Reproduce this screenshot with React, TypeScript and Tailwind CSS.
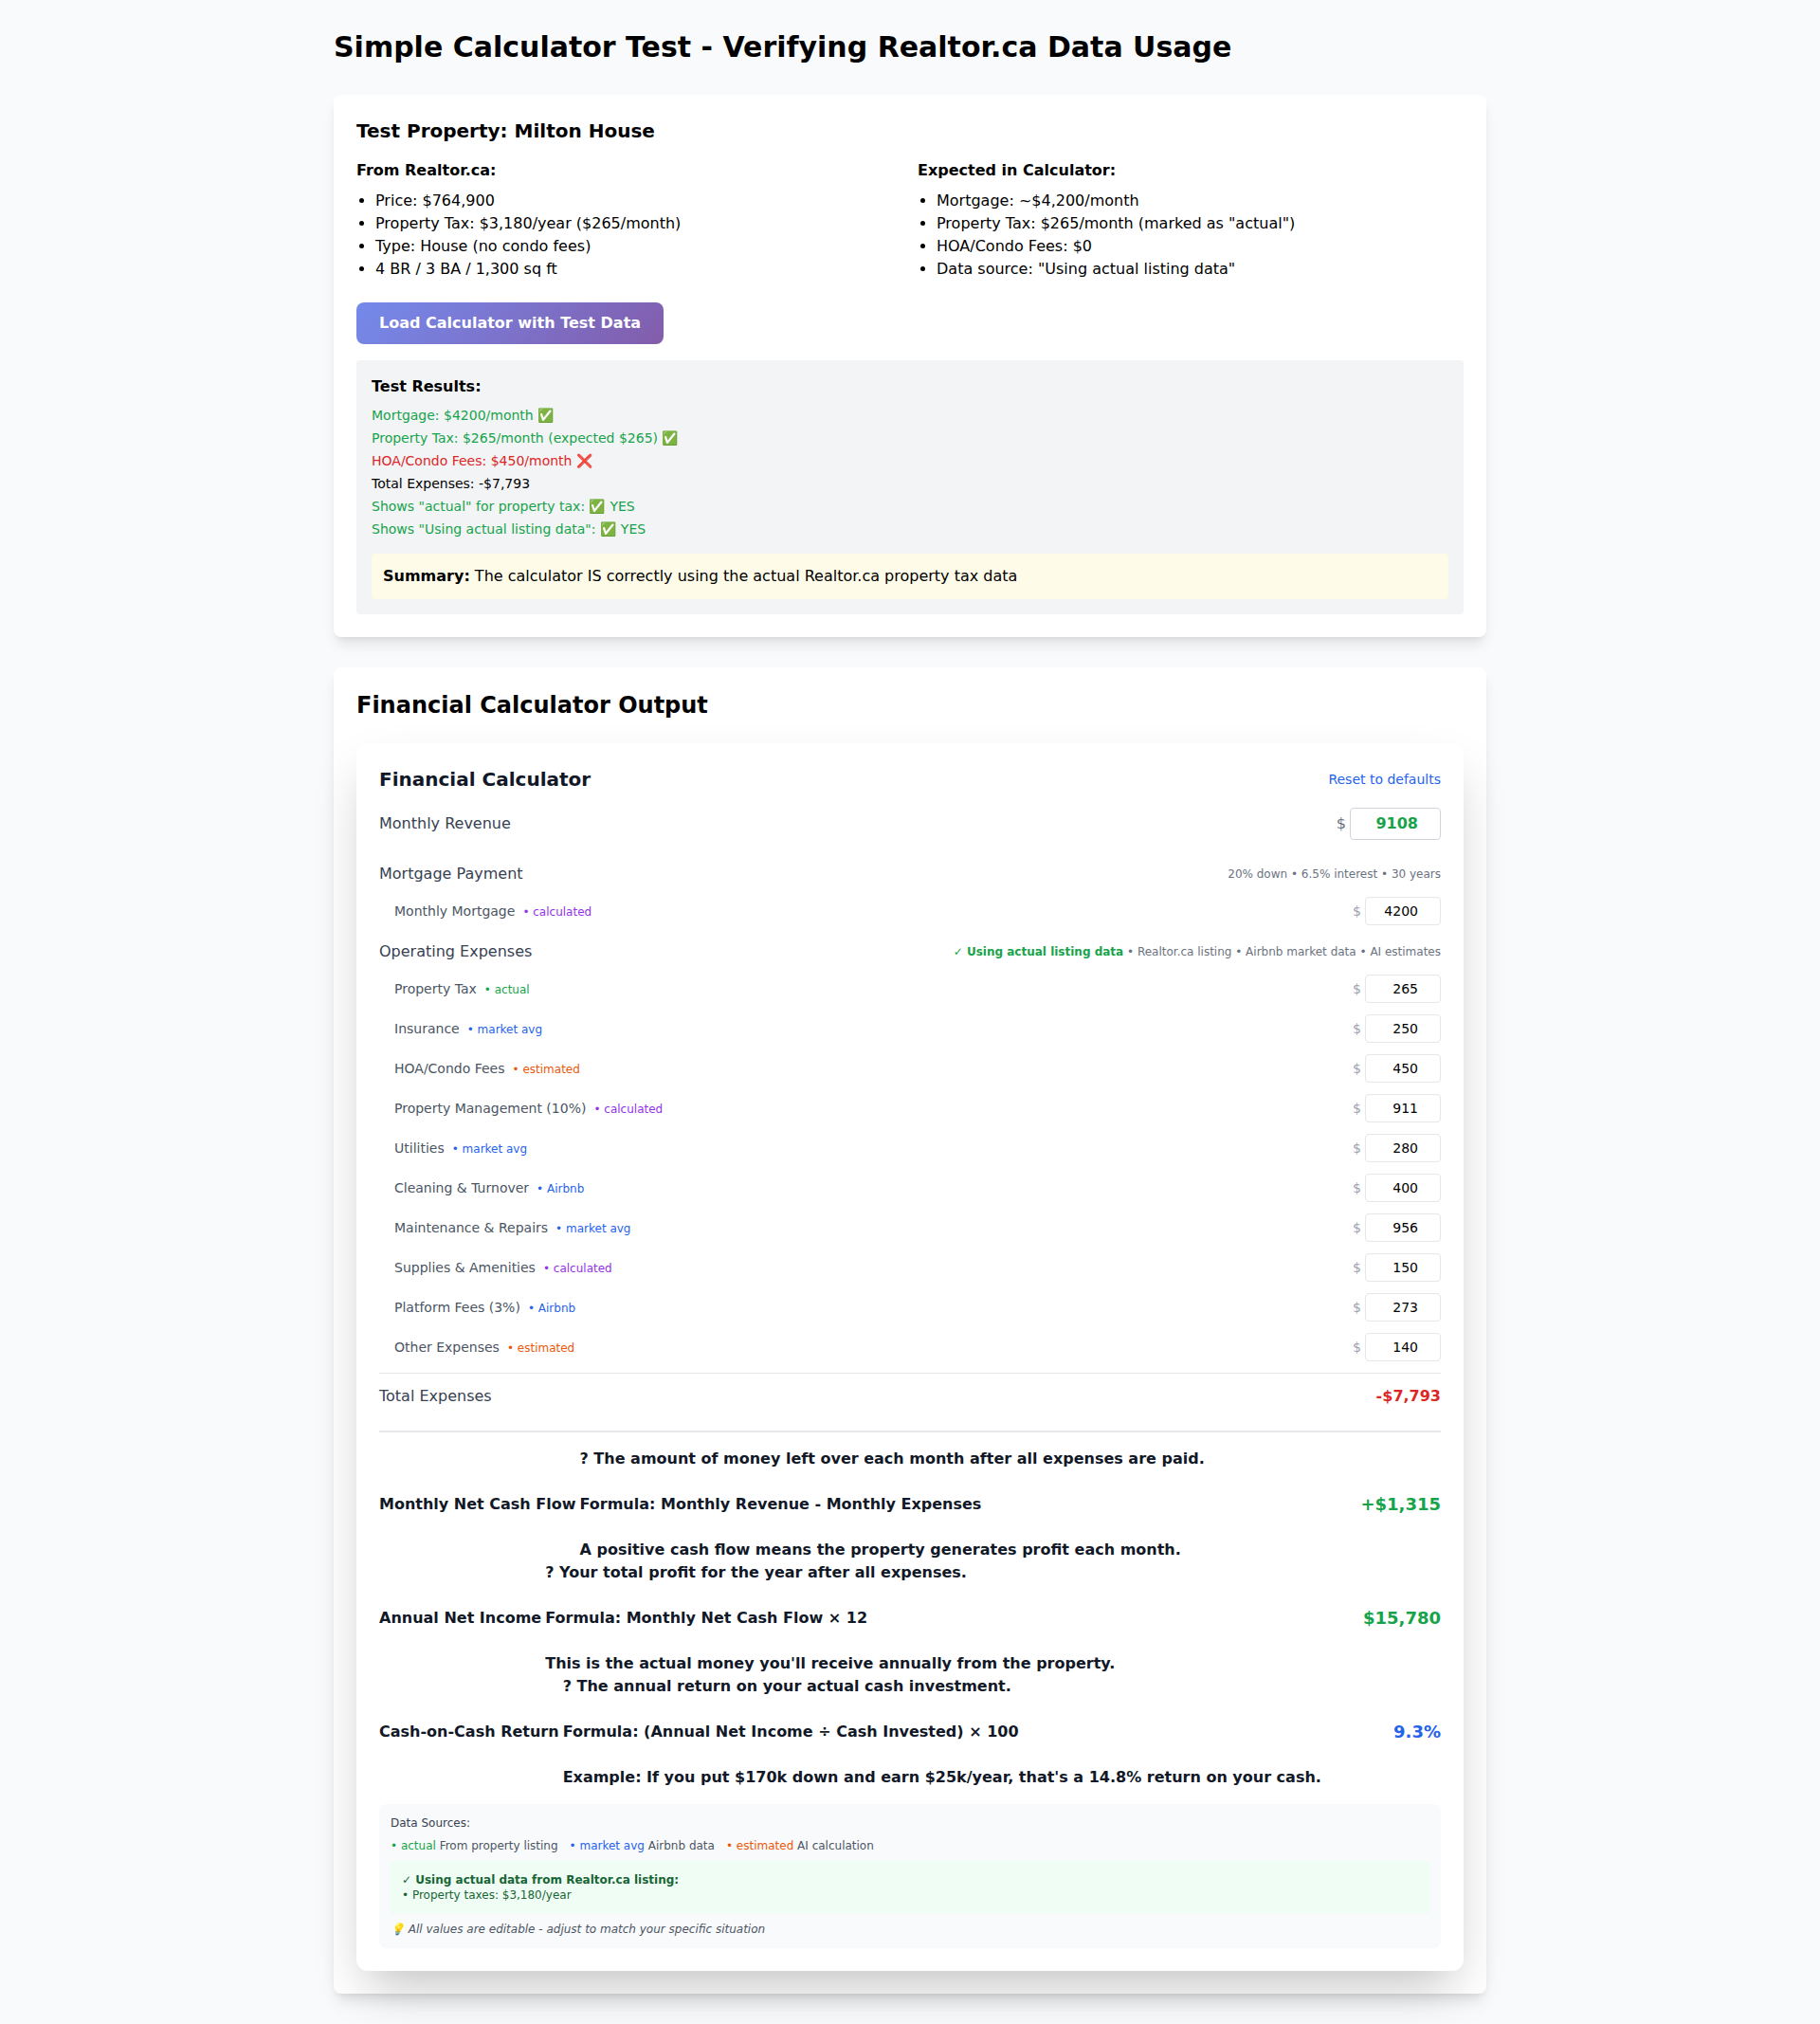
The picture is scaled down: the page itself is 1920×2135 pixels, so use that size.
const sourceColors = {
  actual: 'text-[#16a34a]',
  'market avg': 'text-[#2563eb]',
  estimated: 'text-[#ea580c]',
  calculated: 'text-[#9333ea]',
  Airbnb: 'text-[#2563eb]',
}

type Source = keyof typeof sourceColors

const expenses: {label: string; source: Source; value: number}[] = [
  {label: 'Property Tax', source: 'actual', value: 265},
  {label: 'Insurance', source: 'market avg', value: 250},
  {label: 'HOA/Condo Fees', source: 'estimated', value: 450},
  {label: 'Property Management (10%)', source: 'calculated', value: 911},
  {label: 'Utilities', source: 'market avg', value: 280},
  {label: 'Cleaning & Turnover', source: 'Airbnb', value: 400},
  {label: 'Maintenance & Repairs', source: 'market avg', value: 956},
  {label: 'Supplies & Amenities', source: 'calculated', value: 150},
  {label: 'Platform Fees (3%)', source: 'Airbnb', value: 273},
  {label: 'Other Expenses', source: 'estimated', value: 140},
]

const metrics = [
  {
    label: 'Monthly Net Cash Flow',
    question: '? The amount of money left over each month after all expenses are paid.',
    formula: 'Formula: Monthly Revenue - Monthly Expenses',
    note: 'A positive cash flow means the property generates profit each month.',
    value: '+$1,315',
    color: 'text-[#16a34a]',
  },
  {
    label: 'Annual Net Income',
    question: '? Your total profit for the year after all expenses.',
    formula: 'Formula: Monthly Net Cash Flow × 12',
    note: "This is the actual money you'll receive annually from the property.",
    value: '$15,780',
    color: 'text-[#16a34a]',
  },
  {
    label: 'Cash-on-Cash Return',
    question: '? The annual return on your actual cash investment.',
    formula: 'Formula: (Annual Net Income ÷ Cash Invested) × 100',
    note: "Example: If you put $170k down and earn $25k/year, that's a 14.8% return on your cash.",
    value: '9.3%',
    color: 'text-[#2563eb]',
  },
]

function ExpenseRow({label, source, value}: {label: string; source: Source; value: number}) {
  return (
    <div className="mb-3 flex items-center justify-between pl-4">
      <div className="text-sm text-[#4b5563]">
        {label}
        <span className={`ml-2 text-xs ${sourceColors[source]}`}>• {source}</span>
      </div>
      <div className="flex items-center">
        <span className="mr-1 text-sm text-[#9ca3af]">$</span>
        <input
          type="number"
          defaultValue={value}
          className="h-[30px] w-20 rounded border border-[#e5e7eb] bg-white px-2 text-right text-sm text-black"
        />
      </div>
    </div>
  )
}

function Metric({label, question, formula, note, value, color}: (typeof metrics)[number]) {
  return (
    <div className="flex items-center justify-between">
      <div className="flex items-center font-semibold text-[#111827]">
        <span className="mr-1">{label}</span>
        <div className="flex flex-col gap-6 whitespace-nowrap">
          <span>{question}</span>
          <span>{formula}</span>
          <span>{note}</span>
        </div>
      </div>
      <span className={`text-lg font-bold ${color}`}>{value}</span>
    </div>
  )
}

export default function App() {
  return (
    <div className="min-h-screen bg-[#f9fafb] font-['DejaVu_Sans','Noto_Color_Emoji',sans-serif] text-black">
      <div className="mx-auto max-w-[1280px] px-8 py-8">
        <h1 className="mb-8 text-3xl font-bold">Simple Calculator Test - Verifying Realtor.ca Data Usage</h1>

        <section className="mb-8 rounded-lg bg-white p-6 shadow-lg">
          <h2 className="mb-4 text-xl font-bold">Test Property: Milton House</h2>
          <div className="mb-[23px] grid grid-cols-2 gap-4">
            <div>
              <h3 className="mb-2 font-semibold">From Realtor.ca:</h3>
              <ul className="list-disc pl-5">
                <li>Price: $764,900</li>
                <li>Property Tax: $3,180/year ($265/month)</li>
                <li>Type: House (no condo fees)</li>
                <li>4 BR / 3 BA / 1,300 sq ft</li>
              </ul>
            </div>
            <div>
              <h3 className="mb-2 font-semibold">Expected in Calculator:</h3>
              <ul className="list-disc pl-5">
                <li>Mortgage: ~$4,200/month</li>
                <li>Property Tax: $265/month (marked as "actual")</li>
                <li>HOA/Condo Fees: $0</li>
                <li>Data source: "Using actual listing data"</li>
              </ul>
            </div>
          </div>

          <button className="h-11 rounded-lg bg-[linear-gradient(135deg,#667eea,#764ba2)] px-6 font-semibold text-white opacity-90">
            Load Calculator with Test Data
          </button>

          <div className="mt-[17px] rounded bg-[#f3f4f6] p-4">
            <h3 className="mb-2 font-semibold">Test Results:</h3>
            <div className="space-y-1 text-sm">
              <div className="text-[#16a34a]">Mortgage: $4200/month ✅</div>
              <div className="text-[#16a34a]">Property Tax: $265/month (expected $265) ✅</div>
              <div className="text-[#dc2626]">HOA/Condo Fees: $450/month ❌</div>
              <div>Total Expenses: -$7,793</div>
              <div className="text-[#16a34a]">Shows "actual" for property tax: ✅ YES</div>
              <div className="text-[#16a34a]">Shows "Using actual listing data": ✅ YES</div>
            </div>
            <div className="mt-4 rounded bg-[#fefce8] p-3">
              <strong>Summary:</strong> The calculator IS correctly using the actual Realtor.ca property tax data
            </div>
          </div>
        </section>

        <section className="rounded-lg bg-white p-6 shadow-lg">
          <h2 className="mb-6 text-2xl font-bold">Financial Calculator Output</h2>

          <div className="rounded-xl bg-white p-6 shadow-2xl">
            <div className="mb-4 flex items-center justify-between">
              <h3 className="text-xl font-bold text-[#111827]">Financial Calculator</h3>
              <button className="text-sm text-[#2563eb]">Reset to defaults</button>
            </div>

            <div className="mb-6 flex items-center justify-between">
              <span className="text-[#374151]">Monthly Revenue</span>
              <div className="flex items-center">
                <span className="mr-1 text-[#6b7280]">$</span>
                <input
                  type="number"
                  defaultValue={9108}
                  className="h-[34px] w-24 rounded border border-[#d1d5db] bg-white px-2 pb-[2px] text-right font-bold text-[#16a34a]"
                />
              </div>
            </div>

            <div className="mb-3 flex items-center justify-between">
              <span className="text-[#374151]">Mortgage Payment</span>
              <span className="text-xs text-[#6b7280]">20% down • 6.5% interest • 30 years</span>
            </div>
            <div className="mb-4 flex items-center justify-between pl-4">
              <div className="text-sm text-[#4b5563]">
                Monthly Mortgage
                <span className="ml-2 text-xs text-[#9333ea]">• calculated</span>
              </div>
              <div className="flex items-center">
                <span className="mr-1 text-sm text-[#9ca3af]">$</span>
                <input
                  type="number"
                  defaultValue={4200}
                  className="h-[30px] w-20 rounded border border-[#e5e7eb] bg-white px-2 text-right text-sm text-black"
                />
              </div>
            </div>

            <div className="mb-3 flex items-center justify-between">
              <span className="text-[#374151]">Operating Expenses</span>
              <span className="text-xs text-[#6b7280]">
                <span className="font-semibold text-[#16a34a]">✓ Using actual listing data</span> • Realtor.ca listing •
                Airbnb market data • AI estimates
              </span>
            </div>
            {expenses.map((expense) => (
              <ExpenseRow key={expense.label} {...expense} />
            ))}

            <div className="flex items-center justify-between border-t border-[#e5e7eb] pt-3 pb-6">
              <span className="text-[#374151]">Total Expenses</span>
              <span className="font-bold text-[#dc2626]">-$7,793</span>
            </div>

            <div className="border-t-2 border-[#e5e7eb] pt-4">
              {metrics.map((metric) => (
                <Metric key={metric.label} {...metric} />
              ))}
            </div>

            <div className="mt-4 rounded-lg bg-[#f9fafb] p-3 text-xs text-[#4b5563]">
              <div className="mb-2 text-[#374151]">Data Sources:</div>
              <div className="flex gap-3">
                <span>
                  <span className="text-[#16a34a]">• actual</span> From property listing
                </span>
                <span>
                  <span className="text-[#2563eb]">• market avg</span> Airbnb data
                </span>
                <span>
                  <span className="text-[#ea580c]">• estimated</span> AI calculation
                </span>
              </div>
              <div className="mt-2 rounded bg-[#f0fdf4] p-3 text-[#166534]">
                <div className="font-semibold">✓ Using actual data from Realtor.ca listing:</div>
                <div>• Property taxes: $3,180/year</div>
              </div>
              <div className="mt-2 italic">💡 All values are editable - adjust to match your specific situation</div>
            </div>
          </div>
        </section>
      </div>
    </div>
  )
}
